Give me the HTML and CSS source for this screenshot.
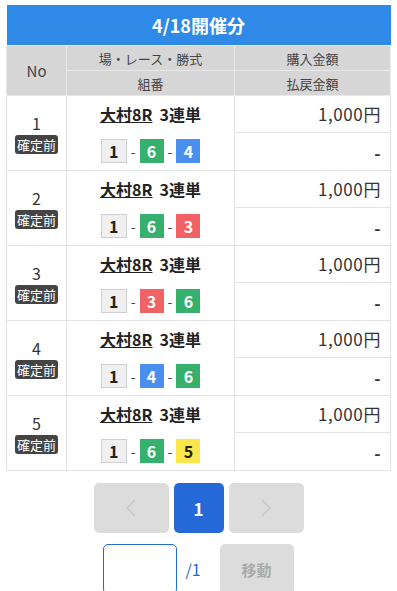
FILE: index.html
```html
<!DOCTYPE html>
<html lang="ja">
<head>
    <meta charset="UTF-8">
    <meta name="viewport" content="width=device-width, initial-scale=1.0">
    <title>投票履歴</title>
    <link rel="stylesheet" href="styles.css">
</head>
<body>

    <table class="list">
        <colgroup>
            <col class="w-no">
            <col class="w-race">
            <col class="w-amount">
        </colgroup>
        <thead>
            <tr><th colspan="3" class="title">4/18開催分</th></tr>
            <tr><th rowspan="2" class="col-no">No</th><th>場・レース・勝式</th><th>購入金額</th></tr>
            <tr><th>組番</th><th>払戻金額</th></tr>
        </thead>
        <tbody>
            <tr>
                <td rowspan="2" class="no">1<span class="badge">確定前</span></td>
                <td class="race"><a href="#">大村8R</a>3連単</td>
                <td class="amount">1,000円</td>
            </tr>
            <tr>
                <td class="combo"><span class="boat b1">1</span>-<span class="boat b6">6</span>-<span class="boat b4">4</span></td>
                <td class="amount pay">-</td>
            </tr>
            <tr>
                <td rowspan="2" class="no">2<span class="badge">確定前</span></td>
                <td class="race"><a href="#">大村8R</a>3連単</td>
                <td class="amount">1,000円</td>
            </tr>
            <tr>
                <td class="combo"><span class="boat b1">1</span>-<span class="boat b6">6</span>-<span class="boat b3">3</span></td>
                <td class="amount pay">-</td>
            </tr>
            <tr>
                <td rowspan="2" class="no">3<span class="badge">確定前</span></td>
                <td class="race"><a href="#">大村8R</a>3連単</td>
                <td class="amount">1,000円</td>
            </tr>
            <tr>
                <td class="combo"><span class="boat b1">1</span>-<span class="boat b3">3</span>-<span class="boat b6">6</span></td>
                <td class="amount pay">-</td>
            </tr>
            <tr>
                <td rowspan="2" class="no">4<span class="badge">確定前</span></td>
                <td class="race"><a href="#">大村8R</a>3連単</td>
                <td class="amount">1,000円</td>
            </tr>
            <tr>
                <td class="combo"><span class="boat b1">1</span>-<span class="boat b4">4</span>-<span class="boat b6">6</span></td>
                <td class="amount pay">-</td>
            </tr>
            <tr>
                <td rowspan="2" class="no">5<span class="badge">確定前</span></td>
                <td class="race"><a href="#">大村8R</a>3連単</td>
                <td class="amount">1,000円</td>
            </tr>
            <tr>
                <td class="combo"><span class="boat b1">1</span>-<span class="boat b6">6</span>-<span class="boat b5">5</span></td>
                <td class="amount pay">-</td>
            </tr>
        </tbody>
    </table>

    <div class="pager">
        <button class="page-btn wide" disabled>
            <svg width="12" height="20" viewBox="0 0 12 20"><path d="M10 2 L2 10 L10 18" fill="none" stroke="#c9c9c9" stroke-width="1.5"/></svg>
        </button>
        <button class="page-btn current">1</button>
        <button class="page-btn wide" disabled>
            <svg width="12" height="20" viewBox="0 0 12 20"><path d="M2 2 L10 10 L2 18" fill="none" stroke="#c9c9c9" stroke-width="1.5"/></svg>
        </button>
    </div>

    <div class="jump">
        <input type="text" class="jump-input">
        <span class="jump-total">/1</span>
        <button class="jump-btn" disabled>移動</button>
    </div>

</body>
</html>
```

FILE: styles.css
```css
body {
    margin: 0;
    font-family: "Noto Sans CJK JP", "Noto Sans", sans-serif;
    color: #333;
    background: #fff;
}

/* 一覧テーブル */
.list {
    width: 384px;
    margin: 5px 6px 0;
    border-collapse: collapse;
    table-layout: fixed;
}

.w-no { width: 60px; }
.w-race { width: 168px; }
.w-amount { width: 156px; }

.list th {
    background-color: #d6d6d6;
    color: #444;
    font-size: 13px;
    font-weight: normal;
    border: 1px solid #e8e8e8;
    height: 24px;
    padding: 0;
}

.list th.title {
    background-color: #2f8ae7;
    color: #fff;
    font-size: 18px;
    font-weight: bold;
    height: 40px;
    border: none;
}

.list th.col-no {
    font-size: 15px;
}

.list td {
    border: 1px solid #e3e3e3;
    padding: 0;
    height: 36px;
    text-align: center;
    vertical-align: middle;
}

.list td.no {
    font-size: 16px;
    line-height: 20px;
    color: #333;
}

.badge {
    display: block;
    width: 43px;
    margin: 2px auto 0;
    background-color: #444;
    color: #fff;
    font-size: 13px;
    line-height: 19px;
    border-radius: 3px;
}

.list td.race {
    border-bottom: none;
    font-size: 16px;
    font-weight: bold;
    color: #222;
    line-height: 20px;
}

.race a {
    color: #222;
    text-decoration: underline;
    margin-right: 7px;
}

.list td.combo {
    border-top: none;
    font-size: 14px;
    line-height: 24px;
    color: #444;
}

.boat {
    display: inline-block;
    width: 24px;
    height: 24px;
    line-height: 24px;
    margin: 0 4px;
    font-size: 16px;
    font-weight: bold;
    color: #fff;
    vertical-align: top;
    box-sizing: border-box;
}

.boat.b1 {
    background-color: #f0f0f0;
    border: 1px solid #cfcfcf;
    line-height: 22px;
    width: 26px;
    color: #222;
}

.boat.b3 { background-color: #f06263; }
.boat.b4 { background-color: #4a8ff0; }
.boat.b5 { background-color: #fbe64b; color: #222; }
.boat.b6 { background-color: #35b06d; }

.list td.amount {
    text-align: right;
    padding-right: 9px;
    font-size: 17px;
    letter-spacing: 0.6px;
    line-height: 20px;
    color: #333;
}

.list td.pay {
    font-weight: bold;
    font-size: 17px;
    padding-top: 3px;
    height: 34px;
}

/* ページ送り */
.pager {
    display: flex;
    justify-content: center;
    gap: 5px;
    margin-top: 12px;
}

.page-btn {
    width: 50px;
    height: 50px;
    border: none;
    border-radius: 5px;
    background-color: #dcdcdc;
    display: flex;
    align-items: center;
    justify-content: center;
    padding: 0;
}

.page-btn.wide {
    width: 75px;
}

.page-btn.current {
    background-color: #2569d9;
    color: #fff;
    font-family: "Noto Sans CJK JP", sans-serif;
    font-size: 17px;
    font-weight: bold;
}

.jump {
    display: flex;
    justify-content: center;
    align-items: center;
    margin-top: 11px;
}

.jump-input {
    width: 74px;
    height: 50px;
    box-sizing: border-box;
    border: 1px solid #2569d9;
    border-radius: 5px;
    margin: 0;
}

.jump-total {
    color: #2569d9;
    font-size: 16px;
    margin: 0 19px 0 8px;
}

.jump-btn {
    width: 74px;
    height: 50px;
    border: none;
    border-radius: 5px;
    background-color: #dcdcdc;
    color: #aaa;
    font-family: "Noto Sans CJK JP", sans-serif;
    font-size: 15px;
    font-weight: bold;
}
```
